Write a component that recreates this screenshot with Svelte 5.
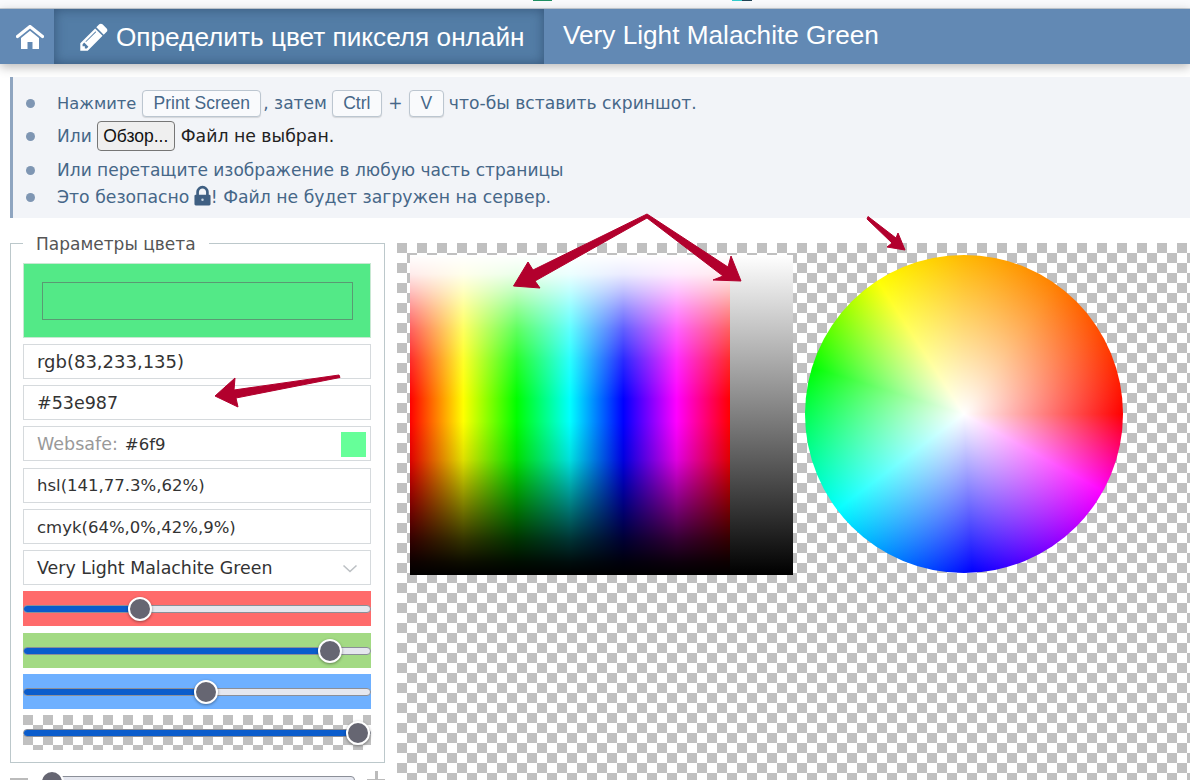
<script>
  const sliders = [
    { cls: 'red', x: 117 },
    { cls: 'green', x: 307 },
    { cls: 'blue', x: 183 },
    { cls: 'alpha', x: 335 }
  ];
</script>

<div class="page">
  <div class="topstrip">
    <i class="mark m1"></i>
    <i class="mark m2"></i>
  </div>
  <nav class="nav">
    <a class="home" aria-label="home">
      <svg viewBox="0 0 28 24" width="28" height="24">
        <path d="M1.5 11.5 14 1.5l12.5 10" fill="none" stroke="#fff" stroke-width="3.2" stroke-linecap="round" stroke-linejoin="round" />
        <path d="M5 13 14 5.8 23 13v11h-6.5v-7h-5v7H5z" fill="#fff" />
      </svg>
    </a>
    <a class="active">
      <svg viewBox="0 0 1792 1792" width="32" height="32">
        <path fill="#fff" d="M491 1536l91-91-235-235-91 91v107h128v128h107zm523-928q0-22-22-22-10 0-17 7l-542 542q-7 7-7 17 0 22 22 22 10 0 17-7l542-542q7-7 7-17zm-54-192l416 416-832 832h-416v-416zm683 96q0 53-37 90l-166 166-416-416 166-165q36-38 90-38 53 0 91 38l235 234q37 39 37 91z" />
      </svg>
      <span>Определить цвет пикселя онлайн</span>
    </a>
    <span class="colorname">Very Light Malachite Green</span>
  </nav>

  <ul class="info">
    <li class="r1"><span class="press">Нажмите</span><kbd class="ps">Print Screen</kbd><span class="then">, затем</span><kbd class="ctrl">Ctrl</kbd><span class="plus">+</span><kbd class="v">V</kbd><span class="rest">что-бы вставить скриншот.</span></li>
    <li class="r2"><span>Или</span><button class="browse">Обзор...</button><span class="nofile">Файл не выбран.</span></li>
    <li class="r3">Или перетащите изображение в любую часть страницы</li>
    <li class="r4"><span>Это безопасно</span>
      <svg class="lock" viewBox="0 0 1792 1792" width="25" height="25">
        <path fill="#3f5f82" d="M640 768h512v-192q0-106-75-181t-181-75-181 75-75 181v192zm832 96v576q0 40-28 68t-68 28h-960q-40 0-68-28t-28-68v-576q0-40 28-68t68-28h32v-192q0-184 132-316t316-132 316 132 132 316v192h32q40 0 68 28t28 68z" />
        <circle cx="896" cy="1130" r="90" fill="#c5d2e0" />
      </svg><span>! Файл не будет загружен на сервер.</span></li>
  </ul>

  <main class="main">
    <div class="left">
      <fieldset class="params">
        <legend>Параметры цвета</legend>
        <div class="swatch"><div class="swatch-inner"></div></div>
        <div class="field rgb">rgb(83,233,135)</div>
        <div class="field hex">#53e987</div>
        <div class="field websafe"><span class="label">Websafe:</span><span class="val">#6f9</span><i class="safe"></i></div>
        <div class="field hsl">hsl(141,77.3%,62%)</div>
        <div class="field">cmyk(64%,0%,42%,9%)</div>
        <div class="field select">
          <span>Very Light Malachite Green</span>
          <svg viewBox="0 0 16 9" width="16" height="9"><path d="M1.5 1.5 8 7.5l6.5-6" fill="none" stroke="#bcc0c4" stroke-width="1.6" /></svg>
        </div>
        {#each sliders as s}
          <div class="slider {s.cls}">
            <div class="track">
              <div class="fill" style="width:{s.x}px"></div>
            </div>
            <div class="thumb" style="left:{s.x - 12}px"></div>
          </div>
        {/each}
      </fieldset>
      <div class="zoom">
        <i class="minus"></i>
        <div class="ztrack"><div class="zthumb"></div></div>
        <i class="zplus"></i>
      </div>
    </div>

    <div class="stage">
      <div class="picker">
        <div class="hues"></div>
        <div class="grays"></div>
      </div>
      <div class="wheel"></div>
    </div>
  </main>

  <svg class="arrows" viewBox="0 0 1190 780" width="1190" height="780" aria-hidden="true">
    <g fill="#b2002d" stroke="#b2002d" stroke-width="1" stroke-linejoin="round">
      <path d="M215 396 235 378 234 390 339 375 340 377.5 236 398 238 407z" />
      <path d="M647 214 533 270 528 262 513.500 286 540 288 535 281 647 218 723 276 713 280 741 281 731 256 728 267z" />
      <path d="M868 216.500 896 238 898 233 905 250 887 247 892 243 867 219z" />
    </g>
  </svg>
</div>

<style>
  :global(html), :global(body) {
    margin: 0;
    overflow: hidden;
    background: #fff;
  }
  .page {
    width: 1190px;
    height: 780px;
    overflow: hidden;
    position: relative;
    font-family: "DejaVu Sans", sans-serif;
  }
  .topstrip {
    height: 8px;
    background: #f9fafc;
    border-bottom: 1px solid #c9d0d8;
    position: relative;
  }
  .mark { position: absolute; top: 0; height: 1px; }
  .m1 { left: 533px; width: 19px; background: #1f8f62; }
  .m2 { left: 732px; width: 20px; background: linear-gradient(90deg, #3cc 50%, #245 50%); }

  .nav {
    height: 55px;
    display: flex;
    align-items: stretch;
    background: #6289b4;
    box-shadow: 0 3px 10px rgba(0, 0, 0, 0.28);
    color: #fff;
    font-family: "Liberation Sans", Arial, sans-serif;
    position: relative;
  }
  .home {
    width: 54px;
    display: flex;
    align-items: center;
    justify-content: center;
    padding-left: 6px;
    box-sizing: border-box;
  }
  .active {
    width: 490px;
    display: flex;
    align-items: center;
    gap: 6px;
    padding: 1px 0 0 24px;
    box-sizing: border-box;
    background: #537da6;
    box-shadow: inset 0 0 12px rgba(30, 55, 85, 0.55);
    font-size: 26.200px;
    white-space: nowrap;
  }
  .colorname {
    margin-left: 19px;
    font-size: 26.200px;
    line-height: 52px;
    white-space: nowrap;
  }

  .info {
    list-style: none;
    margin: 13px 0 0 10px;
    padding: 0 0 0 43px;
    height: 141px;
    box-sizing: border-box;
    position: relative;
    background: #f2f4f8;
    border-left: 3px solid #8fa5c0;
    font-size: 17.050px;
    color: #466788;
  }
  .info li {
    position: absolute;
    left: 44px;
    white-space: nowrap;
    display: flex;
    align-items: center;
    height: 30px;
  }
  .info li::before {
    content: "";
    position: absolute;
    left: -31px;
    top: 11px;
    width: 9px;
    height: 9px;
    border-radius: 50%;
    background: #7f96b3;
  }
  .r1 { top: 11px; }
  .r2 { top: 44px; }
  .r3 { top: 78px; }
  .r4 { top: 105px; font-size: 17.250px; }
  .lock { margin: -2px -4.500px 0 1px; }
  .press { font-size: 16.300px; }
  kbd {
    display: inline-flex;
    align-items: center;
    justify-content: center;
    height: 27px;
    box-sizing: border-box;
    border: 1px solid #bcc6d0;
    border-radius: 4px;
    background: #f9fafc;
    box-shadow: 0 1px 1px rgba(0, 0, 0, 0.12);
    font-family: "Liberation Sans", Arial, sans-serif;
    font-size: 17.500px;
  }
  .ps { width: 119px; margin-left: 6px; }
  .then { margin: 0 5px 0 2px; }
  .ctrl { width: 50px; }
  .v { width: 35px; }
  .plus { width: 27px; text-align: center; }
  .rest { margin-left: 5px; font-size: 17.150px; }
  .browse {
    width: 78px;
    height: 30px;
    margin: 0 6px 0 5px;
    padding: 0;
    border: 1px solid #767676;
    border-radius: 4px;
    background: #efefef;
    color: #111;
    font-family: "Liberation Sans", Arial, sans-serif;
    font-size: 17.500px;
  }
  .nofile { color: #222; font-size: 17.300px; }

  .main {
    display: flex;
    margin-top: 25px;
    align-items: flex-start;
  }
  .left { margin-left: 10px; width: 375px; flex: none; }
  .params {
    margin: -10px 0 0;
    padding: 10px 13px 12px 12px;
    width: 375px;
    box-sizing: border-box;
    border: 1px solid #bcc8cb;
    display: flex;
    flex-direction: column;
    gap: 6px;
  }
  legend {
    padding: 0 13px;
    font-size: 17px;
    color: #555;
    line-height: 20px;
    position: relative;
    top: 1px;
  }
  .swatch {
    height: 75px;
    flex: none;
    box-sizing: border-box;
    background: #53e987;
    border: 1px solid #c8e8d2;
    display: flex;
    align-items: center;
    justify-content: center;
  }
  .swatch-inner {
    width: 311px;
    height: 38px;
    box-sizing: border-box;
    border: 1px solid #5a9a73;
  }
  .field {
    height: 35px;
    box-sizing: border-box;
    flex: none;
    border: 1px solid #d6dadd;
    background: #fff;
    color: #333;
    font-size: 16.500px;
    display: flex;
    align-items: center;
    padding: 1px 0 0 13px;
    white-space: nowrap;
  }
  .rgb { font-size: 18px; padding-top: 0; }
  .hex { font-size: 17.500px; }
  .hsl { margin-top: 1px; padding-top: 0; }
  .websafe .label { color: #999; margin-right: 7px; font-size: 17.500px; }
  .safe {
    margin-left: auto;
    margin-right: 4px;
    width: 25px;
    height: 25px;
    background: #66ff99;
  }
  .select { justify-content: space-between; padding-right: 12px; font-size: 17.400px; }
  .slider {
    height: 35px;
    flex: none;
    position: relative;
    display: flex;
    align-items: center;
  }
  .green { margin-top: 1px; }
  .red { background: #ff6b6b; }
  .green { background: #a3da84; }
  .blue { background: #6eb0ff; }
  .alpha {
    background: repeating-conic-gradient(#fff 0 25%, #c0c0c0 0 50%) 0 0 / 20px 20px;
  }
  .track {
    width: 100%;
    height: 8px;
    box-sizing: border-box;
    border: 1px solid #8b8f98;
    border-radius: 4px;
    background: #e5e7ef;
    overflow: hidden;
  }
  .fill { height: 100%; background: #0a5ccc; }
  .thumb {
    position: absolute;
    top: 5.500px;
    width: 24px;
    height: 24px;
    box-sizing: border-box;
    border-radius: 50%;
    background: #666672;
    border: 2px solid #fff;
    box-shadow: 0 1px 3px rgba(0, 0, 0, 0.4);
  }
  .zoom {
    margin-top: 13px;
    position: relative;
    height: 30px;
  }
  .minus {
    position: absolute;
    left: 0;
    top: 2px;
    width: 18px;
    height: 3px;
    background: #bbb;
  }
  .ztrack {
    position: absolute;
    left: 32px;
    right: 30px;
    top: 0;
    height: 8px;
    box-sizing: border-box;
    border: 1px solid #8b8f98;
    border-radius: 4px;
    background: #e5e7ef;
  }
  .zthumb {
    position: absolute;
    left: -3px;
    top: -7px;
    width: 24px;
    height: 24px;
    border-radius: 50%;
    box-sizing: border-box;
    background: #666672;
    border: 2px solid #fff;
  }
  .zplus {
    position: absolute;
    left: 357px;
    top: -5px;
    width: 18px;
    height: 18px;
    background:
      linear-gradient(#bbb, #bbb) center / 18px 3px no-repeat,
      linear-gradient(#bbb, #bbb) center / 3px 18px no-repeat;
  }

  .stage {
    flex: 1;
    margin-left: 12px;
    height: 537px;
    box-sizing: border-box;
    padding: 12px 0 0 13px;
    display: flex;
    align-items: flex-start;
    gap: 12px;
    background: repeating-conic-gradient(#fff 0 25%, #c0c0c0 0 50%) 0 0 / 20px 20px;
  }
  .picker {
    display: flex;
    width: 383px;
    height: 320px;
    flex: none;
  }
  .hues {
    width: 320px;
    background:
      linear-gradient(#fff 0%, rgba(255, 255, 255, 0.92) 6%, rgba(255, 255, 255, 0.76) 11%, rgba(255, 255, 255, 0.56) 17%, rgba(255, 255, 255, 0.38) 23%, rgba(255, 255, 255, 0.16) 33%, rgba(255, 255, 255, 0) 45%, rgba(0, 0, 0, 0) 52%, rgba(0, 0, 0, 0.13) 64%, rgba(0, 0, 0, 0.45) 76%, rgba(0, 0, 0, 0.8) 89%, rgba(0, 0, 0, 0.95) 96%, #000 100%),
      linear-gradient(90deg, #f00 0, #ff0 16.67%, #0f0 33.33%, #0ff 50%, #00f 66.67%, #f0f 83.33%, #f00 100%);
  }
  .grays {
    width: 63px;
    background: linear-gradient(#fff, #000);
  }
  .wheel {
    width: 318px;
    height: 318px;
    flex: none;
    border-radius: 50%;
    background:
      radial-gradient(circle closest-side, #fff 0, rgba(255, 255, 255, 0) 100%),
      conic-gradient(#ffb800 0deg, #ff8000 35deg, #ff4800 60deg, #f00 90deg, #f0f 119deg, #00f 177deg, #0ff 233deg, #0f0 287deg, #ff0 327deg, #ffb800 360deg);
  }
  .arrows {
    position: absolute;
    left: 0;
    top: 0;
    pointer-events: none;
  }
</style>
